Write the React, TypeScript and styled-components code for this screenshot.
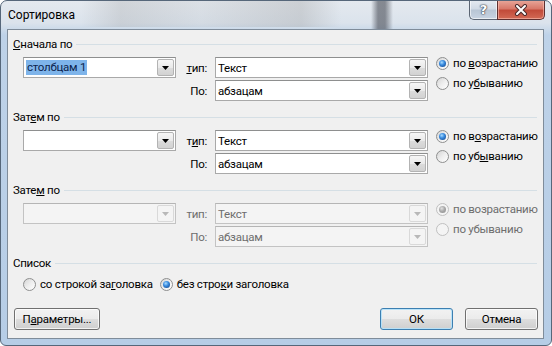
import React from 'react';
import styled, { createGlobalStyle, css } from 'styled-components';

const GlobalStyle = createGlobalStyle`
  html, body {
    margin: 0;
    padding: 0;
  }
  body {
    font-family: Roboto, 'Noto Sans', sans-serif;
    font-size: 11.5px;
    letter-spacing: -0.25px;
    color: #000;
  }
`;

const Window = styled.div`
  width: 552px;
  height: 346px;
  box-sizing: border-box;
  border: 1px solid #56677a;
  border-radius: 7px 7px 6px 6px;
  padding: 0 7px 6px 6px;
  display: flex;
  flex-direction: column;
  overflow: hidden;
  background:
    linear-gradient(90deg, transparent 370px, rgba(70, 74, 84, 0.6) 377px, rgba(70, 74, 84, 0.6) 384px, transparent 392px) top / 100% 28px no-repeat,
    linear-gradient(90deg, transparent 80px, rgba(150, 150, 150, 0.25) 120px, rgba(150, 150, 150, 0.1) 200px, rgba(150, 150, 150, 0.3) 300px, transparent 340px) top / 100% 26px no-repeat,
    linear-gradient(180deg, #e4e9ef 0px, #dbe3ec 22px, #bed2e8 34px, #b6cde6 100%);
`;

const TitleBar = styled.div`
  height: 28px;
  display: flex;
  align-items: flex-start;
  justify-content: space-between;
`;

const Title = styled.div`
  padding: 6px 0 0 1px;
  line-height: 16px;
  font-size: 12px;
  letter-spacing: 0;
`;

const Caption = styled.div`
  display: flex;
  margin: -1px -1px 0 0;
`;

const captionBase = css`
  height: 20px;
  box-sizing: border-box;
  display: flex;
  align-items: center;
  justify-content: center;
  border: 1px solid #5b6573;
  border-top: none;
`;

const HelpButton = styled.div`
  ${captionBase};
  width: 28px;
  border-right: none;
  border-radius: 0 0 0 5px;
  background: linear-gradient(180deg, #e6ebf1 0%, #d2dbe6 45%, #b9c6d5 55%, #c8d4e2 100%);
  box-shadow: inset 0 0 0 1px rgba(255, 255, 255, 0.6);
  color: #fff;
  font-family: 'DejaVu Sans', sans-serif;
  font-size: 13px;
  font-weight: bold;
  letter-spacing: 0;
  text-shadow: 0 0 1px #3a4250, 0 0 1px #3a4250, 0 0 2px #3a4250;
`;

const CloseButton = styled.div`
  ${captionBase};
  width: 48px;
  border-radius: 0 0 5px 0;
  border-color: #5e2f2f;
  background: linear-gradient(180deg, #e9a99c 0%, #d8796a 45%, #c24b3a 55%, #d26a55 100%);
  box-shadow: inset 0 0 0 1px rgba(255, 200, 190, 0.55);
`;

const Client = styled.div`
  flex: 1;
  border: 1px solid #7f8c9a;
  background: #f0f0f0;
  padding: 6px 6px 0 5px;
  display: flex;
  flex-direction: column;
`;

const Group = styled.div`
  display: flex;
  flex-direction: column;
  margin-bottom: 8px;
`;

const GroupHeader = styled.div`
  height: 16px;
  display: flex;
  align-items: center;
`;

const GroupLabel = styled.span`
  line-height: 16px;
`;

const GroupLine = styled.div`
  flex: 1;
  margin-left: 4px;
  border-top: 1px solid #d5dfe5;
`;

const SortGrid = styled.div`
  margin: 5px 0 0 10px;
  display: grid;
  grid-template-columns: 153px 23px 213px 1fr;
  grid-template-rows: 21px 21px;
  column-gap: 8px;
  row-gap: 2px;
  align-items: center;
`;

const FieldLabel = styled.span<{ $disabled?: boolean }>`
  justify-self: end;
  color: ${(p) => (p.$disabled ? '#6d6d6d' : '#000')};
`;

const Combo = styled.div<{ $disabled?: boolean }>`
  height: 21px;
  box-sizing: border-box;
  border: 1px solid ${(p) => (p.$disabled ? '#c3c3c3' : '#a9a9a9')};
  border-top-color: ${(p) => (p.$disabled ? '#b5b5b5' : '#8e8f8f')};
  background: ${(p) => (p.$disabled ? '#f4f4f4' : '#fff')};
  display: flex;
  align-items: stretch;
`;

const ComboText = styled.div<{ $disabled?: boolean }>`
  flex: 1;
  display: flex;
  align-items: center;
  padding-left: 2px;
  color: ${(p) => (p.$disabled ? '#6d6d6d' : '#000')};
`;

const Highlight = styled.span`
  background: #7eb4ea;
  color: #0b1f4d;
  padding: 0 1px;
  line-height: 15px;
`;

const DropButton = styled.div<{ $disabled?: boolean }>`
  width: 17px;
  margin: 1px;
  box-sizing: border-box;
  border: 1px solid ${(p) => (p.$disabled ? '#d9d9d9' : '#b3b3b3')};
  border-radius: 2px;
  background: ${(p) =>
    p.$disabled
      ? '#f4f4f4'
      : 'linear-gradient(180deg, #f6f6f6 0%, #eaeaea 50%, #dcdcdc 51%, #d2d2d2 100%)'};
  display: flex;
  align-items: center;
  justify-content: center;
`;

const RadioStack = styled.div`
  grid-column: 4;
  grid-row: 1 / span 2;
  align-self: start;
  margin-top: -2px;
  display: flex;
  flex-direction: column;
  gap: 4px;
`;

const Option = styled.label<{ $disabled?: boolean }>`
  height: 16px;
  display: flex;
  align-items: center;
  gap: 4px;
  white-space: nowrap;
  color: ${(p) => (p.$disabled ? '#6d6d6d' : '#000')};
`;

const RadioDot = styled.span<{ $checked?: boolean; $disabled?: boolean }>`
  width: 13px;
  height: 13px;
  box-sizing: border-box;
  border-radius: 50%;
  border: 1px solid ${(p) => (p.$disabled ? '#c0c0c0' : '#8e8f8f')};
  background: ${(p) =>
    p.$disabled
      ? '#f4f4f4'
      : 'linear-gradient(135deg, #d4d4d4 0%, #eeeeee 50%, #ffffff 100%)'};
  display: flex;
  align-items: center;
  justify-content: center;
  &::after {
    content: '';
    width: 7px;
    height: 7px;
    border-radius: 50%;
    display: ${(p) => (p.$checked ? 'block' : 'none')};
    background: ${(p) =>
      p.$disabled
        ? 'radial-gradient(circle at 40% 35%, #e2e2e2 0, #aaaaaa 45%, #8a8a8a 100%)'
        : 'radial-gradient(circle at 40% 35%, #a9dcff 0, #3a8ce0 40%, #0f3c7e 100%)'};
  }
`;

const OptionsRow = styled.div`
  margin: 5px 0 0 10px;
  display: flex;
  gap: 7px;
`;

const Footer = styled.div`
  margin: 16px -1px 0 1px;
  display: flex;
  justify-content: space-between;
`;

const ButtonGroup = styled.div`
  display: flex;
  gap: 12px;
`;

const Button = styled.button<{ $width: number; $default?: boolean }>`
  width: ${(p) => p.$width}px;
  height: 22px;
  box-sizing: border-box;
  padding: 0;
  font: inherit;
  letter-spacing: inherit;
  color: #000;
  border-radius: 3px;
  border: 1px solid ${(p) => (p.$default ? '#3c7fb1' : '#707070')};
  background: linear-gradient(180deg, #f2f2f2 0%, #ebebeb 50%, #dddddd 51%, #cfcfcf 100%);
  box-shadow: inset 0 0 0 1px ${(p) => (p.$default ? 'rgba(180, 225, 250, 0.9)' : 'rgba(255, 255, 255, 0.75)')};
`;

const Key = styled.span`
  text-decoration: underline;
  text-decoration-thickness: 1px;
  text-underline-offset: 1px;
`;

const Arrow = ({ disabled }: { disabled?: boolean }) => (
  <svg width="7" height="4" viewBox="0 0 7 4">
    <path d="M0 0h7L3.5 4z" fill={disabled ? '#b8b8b8' : '#000'} />
  </svg>
);

const CloseGlyph = () => (
  <svg width="14" height="12" viewBox="0 0 14 12">
    <path d="M3 2l8 8M11 2l-8 8" stroke="#4a2a2a" strokeWidth="4" strokeLinecap="round" />
    <path d="M3 2l8 8M11 2l-8 8" stroke="#fff" strokeWidth="2" strokeLinecap="round" />
  </svg>
);

type ComboBoxProps = {
  value?: string;
  selected?: boolean;
  disabled?: boolean;
};

const ComboBox = ({ value, selected, disabled }: ComboBoxProps) => (
  <Combo $disabled={disabled}>
    <ComboText $disabled={disabled}>{selected ? <Highlight>{value}</Highlight> : value}</ComboText>
    <DropButton $disabled={disabled}>
      <Arrow disabled={disabled} />
    </DropButton>
  </Combo>
);

type RadioProps = {
  checked?: boolean;
  disabled?: boolean;
  children: React.ReactNode;
};

const Radio = ({ checked, disabled, children }: RadioProps) => (
  <Option $disabled={disabled}>
    <RadioDot $checked={checked} $disabled={disabled} />
    <span>{children}</span>
  </Option>
);

type SortSection = {
  title: React.ReactNode;
  column: string;
  selected?: boolean;
  disabled?: boolean;
  typeLabel: React.ReactNode;
  asc: React.ReactNode;
  desc: React.ReactNode;
};

const sections: SortSection[] = [
  {
    title: (
      <>
        <Key>С</Key>начала по
      </>
    ),
    column: 'столбцам 1',
    selected: true,
    typeLabel: (
      <>
        <Key>т</Key>ип:
      </>
    ),
    asc: (
      <>
        по <Key>в</Key>озрастанию
      </>
    ),
    desc: (
      <>
        по у<Key>б</Key>ыванию
      </>
    ),
  },
  {
    title: (
      <>
        Зат<Key>е</Key>м по
      </>
    ),
    column: '',
    typeLabel: (
      <>
        т<Key>и</Key>п:
      </>
    ),
    asc: (
      <>
        по в<Key>о</Key>зрастанию
      </>
    ),
    desc: (
      <>
        по уб<Key>ы</Key>ванию
      </>
    ),
  },
  {
    title: (
      <>
        Зате<Key>м</Key> по
      </>
    ),
    column: '',
    disabled: true,
    typeLabel: 'тип:',
    asc: 'по возрастанию',
    desc: 'по убыванию',
  },
];

export default function App() {
  return (
    <>
      <GlobalStyle />
      <Window>
        <TitleBar>
          <Title>Сортировка</Title>
          <Caption>
            <HelpButton>?</HelpButton>
            <CloseButton>
              <CloseGlyph />
            </CloseButton>
          </Caption>
        </TitleBar>
        <Client>
          {sections.map((s, i) => (
            <Group key={i}>
              <GroupHeader>
                <GroupLabel>{s.title}</GroupLabel>
                <GroupLine />
              </GroupHeader>
              <SortGrid>
                <ComboBox value={s.column} selected={s.selected} disabled={s.disabled} />
                <FieldLabel $disabled={s.disabled}>{s.typeLabel}</FieldLabel>
                <ComboBox value="Текст" disabled={s.disabled} />
                <RadioStack>
                  <Radio checked disabled={s.disabled}>
                    {s.asc}
                  </Radio>
                  <Radio disabled={s.disabled}>{s.desc}</Radio>
                </RadioStack>
                <span />
                <FieldLabel $disabled={s.disabled}>По:</FieldLabel>
                <ComboBox value="абзацам" disabled={s.disabled} />
              </SortGrid>
            </Group>
          ))}
          <GroupHeader>
            <GroupLabel>Список</GroupLabel>
            <GroupLine />
          </GroupHeader>
          <OptionsRow>
            <Radio>
              со строкой за<Key>г</Key>оловка
            </Radio>
            <Radio checked>
              без стро<Key>к</Key>и заголовка
            </Radio>
          </OptionsRow>
          <Footer>
            <Button $width={86}>
              П<Key>а</Key>раметры...
            </Button>
            <ButtonGroup>
              <Button $width={73} $default>
                ОК
              </Button>
              <Button $width={73}>Отмена</Button>
            </ButtonGroup>
          </Footer>
        </Client>
      </Window>
    </>
  );
}
